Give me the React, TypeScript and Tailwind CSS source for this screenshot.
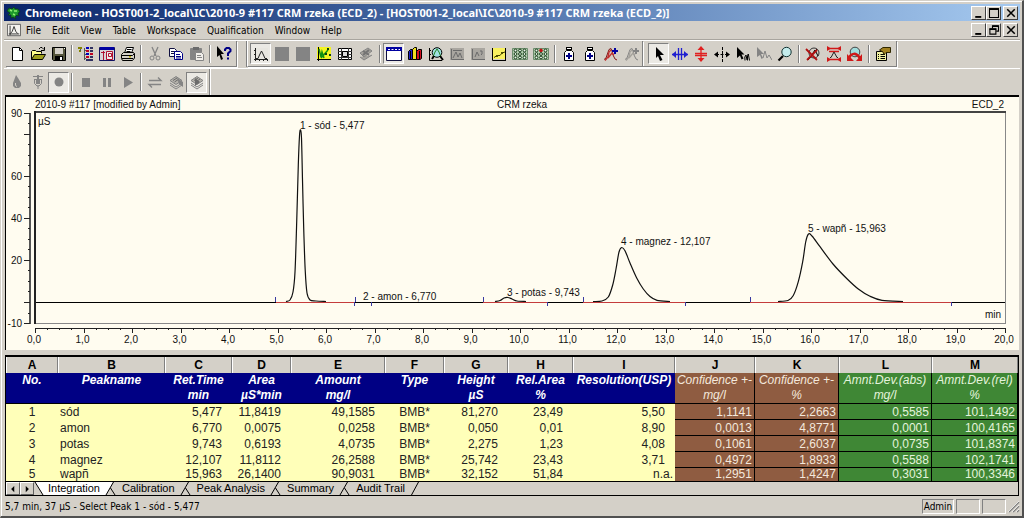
import type { ReactNode } from "react";

const UI = "font-['DejaVu_Sans_Condensed','Noto_Sans',sans-serif]";

/* ---------- icons ---------- */

type LineProps = { d: string; c?: string; f?: string; w?: number };
const L = ({ d, c = "#000", f = "none", w = 1 }: LineProps) => (
  <path d={d} stroke={c} fill={f} strokeWidth={w} />
);
const F = ({ d, c = "#000" }: { d: string; c?: string }) => <path d={d} fill={c} />;

const Icon = ({ children, size = "size-4" }: { children: ReactNode; size?: string }) => (
  <svg viewBox="0 0 16 16" className={`${size} shrink-0`} aria-hidden="true">
    {children}
  </svg>
);

const GREY = "#848484";

const peakGlyph = (c: string, bg: string) => (
  <>
    <F d="M1 2H15V14H1Z" c={bg} />
    <L d="M2.5 2V15M1 13.5H15M1 4.5H2M1 8.5H2M6.5 14V15M10.5 14V15M14.5 13V15" c={c} />
    <L d="M3 12.5H5L6.5 9L8.5 5L10.5 9L12 12.5H14" c={c} />
  </>
);

const bottle = (
  <>
    <F d="M5 1H11V4H5Z" />
    <F d="M6 2H10V3H6Z" c="#fff" />
    <L d="M5.5 4.5H10.5L12.5 6.5V14.5H3.5V6.5Z" f="#fff" />
    <F d="M7 7H9V9H11V11H9V13H7V11H5V9H7Z" c="#000084" />
  </>
);

const vials = (red: boolean) => (
  <>
    <L d="M.5 2.5H15.5V13.5H.5Z" c="#6c8c6c" f="#b4d0b0" />
    {[4.5, 8, 11.5].map((y) =>
      [3.5, 8, 12.5].map((x) => (
        <circle
          key={`${x}-${y}`}
          cx={x}
          cy={y}
          r="1.4"
          fill={red && y === 4.5 && x === 8 ? "#c01010" : "#eef6ee"}
          stroke={red && y === 4.5 && x === 8 ? "#c01010" : "#163c16"}
        />
      )),
    )}
  </>
);

const doublePeak = (c: string, a: string, r: string) => (
  <>
    <L d="M1 13.5L3 12L6 3.5L8 2.5L9 5L10 9L12 13L14 14" c={c} />
    <L d="M2 14.5L5 11L6 6L8 4M5 12L9 7L11 9" c={r} w={1.4} />
    <F d="M11 2H13V4H15V6H13V8H11V6H9V4H11Z" c={a} />
  </>
);

const stack = (on: boolean) => (
  <>
    <L d="M2 11L8 15L14 11M2 9L8 13L14 9" c={GREY} />
    <L d="M2 6.5L8 2.5L14 6.5L8 10.5Z" c={GREY} f="#b5b2ab" />
    <L d="M5 6.5L9 4M6.5 8L11 5" c="#6b6b6b" />
    {on ? <F d="M6 4L11 8L6 12Z" c="#6b6b6b" /> : <F d="M9 4L15 8V13L11 10Z" c={GREY} />}
  </>
);

const icons: Record<string, ReactNode> = {
  new: <><L d="M3.5 1.5H10.5L13.5 4.5V14.5H3.5Z" f="#fff" /><L d="M10.5 1.5V4.5H13.5" /></>,
  open: (
    <>
      <L d="M1.5 13.5V5.5L2.5 4.5H5.5L6.5 5.5H11.5V7.5" f="#ffff8c" />
      <L d="M1.5 13.5L4.5 8.5H15.5L12.5 13.5Z" f="#a0a020" />
      <L d="M9 3L10.5 1.5H12L14 3.5M14.5 1V4.5H11" />
    </>
  ),
  save: (
    <>
      <L d="M1.5 1.5H14.5V14.5H2.5L1.5 13.5Z" f="#55553a" />
      <F d="M4 2H12V8H4Z" c="#d4d0c8" />
      <F d="M4 10H12V14H4Z" />
      <F d="M9 11H11V14H9Z" c="#fff" />
      <F d="M13 2H14V3H13Z" c="#fff" />
    </>
  ),
  tree: (
    <>
      <F d="M0 1H4V3H0ZM1 4H3V6H1Z" c="#848400" />
      <L d="M2.5 3V5M6.5 2V14M6 4.5H8M6 8.5H8M6 12.5H8" c="#555" />
      <F d="M8 1H11V3H8ZM8 7H11V9H8Z" c="#0000c0" />
      <F d="M8 4H11V6H8ZM8 10H11V12H8ZM12 7H15V9H12Z" c="#c00020" />
      <F d="M12 1H15V3H12ZM12 4H15V6H12ZM12 10H15V12H12ZM8 13H15V15H8Z" c="#303060" />
    </>
  ),
  layout: (
    <>
      <L d="M.5 1.5H15.5V14.5H.5Z" c="#101060" f="#d8d4d8" />
      <F d="M1 1H15V4H1Z" c="#0000a0" />
      <L d="M7.5 5.5H13.5V13.5H7.5ZM9.5 7.5H12.5V10.5H9.5Z" c="#b01030" f="#eee" />
      <L d="M4.5 5V14M2 6.5H6" c="#b01030" />
    </>
  ),
  print: (
    <>
      <L d="M4.5 7L6.5 1.5H13.5L11.5 7" f="#fff" />
      <L d="M7 3.5H11.5M6.5 5.5H10.5" />
      <L d="M1.5 8.5L3.5 6.5H13.5L14.5 8V12L12.5 14.5H2.5L1.5 12.5Z" f="#d4d0c8" />
      <L d="M1.5 9.5H12.5L14.5 7.5M2 12.5H13" />
      <F d="M9 10H11V11.5H9Z" c="#c0b000" />
    </>
  ),
  cut: (
    <>
      <L d="M5 1L9 10M11 1L7 10" c={GREY} w={1.3} />
      <circle cx="5" cy="12" r="2" fill="none" stroke={GREY} />
      <circle cx="11" cy="12" r="2" fill="none" stroke={GREY} />
    </>
  ),
  copy: (
    <>
      <L d="M1.5 2.5H6.5L8.5 4.5V10.5H1.5Z" c="#101040" f="#fff" />
      <L d="M3 5.5H7M3 7.5H7" c="#101040" />
      <L d="M6.5 5.5H12.5L14.5 7.5V13.5H6.5Z" c="#000084" f="#fff" />
      <L d="M8 8.5H12M8 10.5H13M8 12H13" c="#000084" />
    </>
  ),
  paste: (
    <>
      <L d="M1.5 2.5H12.5V13.5H1.5Z" c={GREY} f={GREY} />
      <F d="M4 1H10V4H4Z" c="#6b6b6b" />
      <L d="M6.5 6.5H12.5L14.5 8.5V14.5H6.5Z" c={GREY} f="#f0eeea" />
      <L d="M8 9.5H12M8 11.5H13" c={GREY} />
    </>
  ),
  help: (
    <>
      <F d="M1 0L8 8H5L7 13L5 14L3.5 9L1 11Z" />
      <L d="M9 5V3.5L10.5 2H13L14.5 3.5V5L12 7.5V10M12 11.5V13.5" c="#000084" w={2} />
    </>
  ),
  drop: <><F d="M7 1L9 4L12 9V12L10 14H6L4 12V9Z" c={GREY} /><L d="M6.5 9V11.5L8 12.5" c="#d4d0c8" /></>,
  pump: (
    <>
      <L d="M3 2.5H13M4.5 5V9.5L7 12H9L11.5 9.5V5M4 5.5H12" c={GREY} />
      <F d="M6 6H10V10H6ZM7 1H9V5H7ZM7.5 11H8.5V15H7.5Z" c={GREY} />
    </>
  ),
  record: <circle cx="8" cy="8" r="4.5" fill={GREY} />,
  stop: <F d="M4 4H12V13H4Z" c={GREY} />,
  pause: <F d="M4 4H7V13H4ZM9 4H12V13H9Z" c={GREY} />,
  play: <F d="M4 3L13 8.5L4 14Z" c={GREY} />,
  swap: <L d="M2 6.5H14L11 3.5M14 10.5H2L5 13.5" c={GREY} w={1.4} />,
  stackA: stack(false),
  stackB: stack(true),
  peak: peakGlyph("#222", "#e8e6e0"),
  block: <F d="M1 1H15V15H1Z" c={GREY} />,
  calib: (
    <>
      <F d="M1 1H15V13H1Z" c="#f4f420" />
      <L d="M2.5 1V15M1 13.5H15" />
      <L d="M3 3L5 11L6 6L8 12M5 12L12 4" c="#109010" w={1.5} />
      <F d="M11 2H13V4H11ZM13 8H15V10H13ZM9 7H11V9H9Z" c="#104010" />
    </>
  ),
  report: (
    <>
      <L d="M1.5 2.5H14.5V13.5H1.5Z" f="#fff" />
      <L d="M1 5.5H15M1 8.5H15M1 11.5H15M4.5 2V14M11.5 2V14" c="#333" />
      <L d="M5.5 5.5H10.5V10.5H5.5Z" f="#ddd" />
    </>
  ),
  flip: (
    <>
      <L d="M2 7L10 2L14 5L6 11ZM2 11L6 14L14 9" c={GREY} f="#a5a29c" />
      <L d="M5 5L11 9M11 4L5 9" c="#747474" w={2} />
    </>
  ),
  window: <><L d="M.5 1.5H15.5V14.5H.5Z" c="#101040" f="#fff" /><F d="M0 1H16V5H0Z" c="#0000a0" /><path d="M2 3.5H14" stroke="#fff" strokeDasharray="2 1.5" /></>,
  books: (
    <>
      <L d="M1.5 5.5L3.5 3.5H5.5V13.5H1.5Z" f="#2020c0" />
      <L d="M5.5 3.5L7.5 1.5H9.5V13.5H5.5Z" f="#f0e020" />
      <L d="M9.5 5.5L11.5 3.5H14.5V12.5L13 13.5H9.5Z" f="#d01020" />
      <L d="M3.5 5V14M12.5 5V14" />
    </>
  ),
  zoomPeak: (
    <>
      <L d="M1.5 2V14.5H14M1 4.5H3M1 8.5H3" />
      <circle cx="9" cy="6.5" r="4.8" fill="#9fe0e0" stroke="#000" />
      <L d="M5 11L7 6L9 3L11 6L13 11" c="#208020" />
      <L d="M4 13L6 10M12 10L15 14" w={2} />
    </>
  ),
  greyA: <><F d="M1 2H15V14H1Z" c="#a9a6a0" /><L d="M2.5 3V13.5H15M4 12L7 6L9 11L11 7L13 12M4 4.5H13" c="#6b6b6b" /></>,
  greyB: <><F d="M1 2H15V14H1Z" c="#a9a6a0" /><L d="M2.5 3V13.5H15M5 11L7 6L9 10M10 5H12V8L11 9" c="#6b6b6b" /></>,
  trend: <><F d="M2 2H15V13H2Z" c="#f8f060" /><L d="M1.5 2V14.5H15M14.5 2V14" /><L d="M3 11.5L6 9.5H9L11 7L14 6" c="#404000" /><F d="M5 9H7V11H5ZM10 6H12V8H10Z" c="#505000" /></>,
  vials: vials(false),
  vialsRed: vials(true),
  bottle,
  addPeak: doublePeak("#801818", "#0000a0", "#c03030"),
  addPeakOff: doublePeak(GREY, GREY, "#a5a29c"),
  arrow: <F d="M5 1L13 9H9L11.5 14L9 15L7 10L5 12Z" />,
  spreadH: <><L d="M6.5 2V14M9.5 2V14M0 8.5H16" c="#2020d0" w={1.3} /><F d="M0 8.5L4 5V12ZM16 8.5L12 5V12Z" c="#2020d0" /></>,
  spreadV: <><L d="M2 7.5H14M2 9.5H14M8 2V15" c="#e02020" w={1.3} /><F d="M8 0L11.5 4H4.5ZM8 16L11.5 12H4.5Z" c="#e02020" /></>,
  moveLine: <><path d="M8.5 1V16" stroke="#000" strokeDasharray="3 1" /><path d="M2 8.5H15" stroke="#000" strokeDasharray="3 1.5" /><F d="M0 8.5L4 5.5V11.5ZM16 8.5L12 5.5V11.5Z" /></>,
  arrowPeak: <><F d="M2 1L9.5 8.5H6.5L8.5 12.5L6.5 13.5L5 9.5L2 12Z" /><L d="M10 14.5L9.8 11L11 9L12 14M12.5 14.5V9.5L13.3 8L14.5 14.5" /></>,
  arrowPeakOff: <><F d="M1 1L8 8H5L7 12L5.5 13L4 9L1 11Z" c={GREY} /><L d="M7 12L9 5L11 12L13 9L16 14" c={GREY} /></>,
  magnify: <><circle cx="9.5" cy="6" r="4.7" fill="#c4ecec" stroke="#103030" /><L d="M6 10L1.5 14.5" w={2.2} /></>,
  noZoom: (
    <>
      <circle cx="9" cy="7" r="5" fill="none" stroke="#333" />
      <L d="M5 12L8 7L10 4L13 10M3 14L12 3" />
      <L d="M1 3L12 14M2 14L12 4" c="#b01010" w={1.8} />
    </>
  ),
  fit: <><L d="M1 2.5H15M1 13.5H15M3 5.5H13" c="#d01818" w={1.5} /><F d="M1 0L5 2.5L1 5ZM15 0L11 2.5L15 5ZM1 11L5 13.5L1 16ZM15 11L11 13.5L15 16Z" c="#d01818" /><L d="M4 11.5H5L8 6L11 11.5H12" c="#222" /></>,
  redo: <><circle cx="8" cy="6" r="4.8" fill="#a0dcdc" stroke="#444" /><L d="M2 12C4 7 9 6 13 12" c="#d01818" w={2.5} /><F d="M0 8V15H7ZM15 8V15H9Z" c="#d01818" /></>,
  props: (
    <>
      <L d="M1.5 5.5H11.5V14.5H1.5Z" f="#f0f0a0" />
      <L d="M3 8.5H4M5.5 8.5H10M3 10.5H4M5.5 10.5H10M3 12.5H4M5.5 12.5H10" />
      <L d="M4.5 4L8 1.5H15.5V6.5H11L9 8.5L8 6Z" f="#a08020" c="#302800" />
    </>
  ),
};

/* ---------- toolbars ---------- */

type Item = { id: string; label: string; pressed?: boolean } | null;

const b = (id: string, label: string, pressed = false): Item => ({ id, label, pressed });

const fileTools: Item[] = [
  b("new", "New"), b("open", "Open"), b("save", "Save"), null,
  b("tree", "Browser"), b("layout", "Panel"), b("print", "Print"), null,
  b("cut", "Cut"), b("copy", "Copy"), b("paste", "Paste"), null, b("help", "Context help"),
];

const viewTools: Item[] = [
  b("peak", "Chromatogram", true), b("block", "Spectrum"), b("block", "Contour"),
  b("calib", "Calibration plot"), b("report", "Report"), b("flip", "Printer layout"), null,
  b("window", "Window", true), b("books", "Library"), b("zoomPeak", "Peak view"),
  b("greyA", "Spectra view"), b("greyB", "Purity view"), b("trend", "Trend"),
  b("vials", "Vials"), b("vialsRed", "Current vial"), null,
  b("bottle", "Previous sample"), b("bottle", "Next sample"),
  b("addPeak", "Add chromatogram"), b("addPeakOff", "Remove chromatogram"),
];

const editTools: Item[] = [
  b("arrow", "Select", true), b("spreadH", "Peak width"), b("spreadV", "Peak height"),
  b("moveLine", "Move delimiter"), b("arrowPeak", "Peak tool"), b("arrowPeakOff", "Baseline tool"),
  b("magnify", "Zoom"), null, b("noZoom", "Unzoom"), b("fit", "Fit"), b("redo", "Redo"), null,
  b("props", "Properties"),
];

const runTools: Item[] = [
  b("drop", "Flow"), b("pump", "Inject"), b("record", "Acquire", true), null,
  b("stop", "Stop"), b("pause", "Pause"), b("play", "Start"), null,
  b("swap", "Swap"), b("stackA", "Batch"), b("stackB", "Start batch", true),
];

function Tools({ items, wide }: { items: Item[]; wide?: boolean }) {
  return (
    <>
      {items.map((item, i) =>
        item ? (
          <button
            key={i}
            type="button"
            aria-label={item.label}
            className={`flex h-[21px] w-[21px] shrink-0 items-center justify-center ${
              item.pressed ? "border border-t-[#808080] border-l-[#808080] border-r-white border-b-white bg-[#ebe9e4]" : ""
            }`}
          >
            <Icon>{icons[item.id]}</Icon>
          </button>
        ) : (
          <span key={i} className={`flex shrink-0 justify-center ${wide ? "w-[7px]" : "w-1.5"}`}>
            <span className="h-[18px] w-0.5 border-r border-l border-r-white border-l-[#808080]" />
          </span>
        ),
      )}
    </>
  );
}

/* ---------- window chrome ---------- */

function FrameButtons({ restore }: { restore?: boolean }) {
  const cls =
    "flex h-3.5 w-[15px] items-center justify-center border border-t-white border-l-white border-r-[#404040] border-b-[#404040] bg-[#d4d0c8]";
  return (
    <div className="flex shrink-0">
      <button type="button" aria-label="Minimize" className={cls}>
        <Icon size="size-3"><F d="M3 12H11V14.5H3Z" /></Icon>
      </button>
      <button type="button" aria-label={restore ? "Restore" : "Maximize"} className={cls}>
        <Icon size="size-3">
          {restore ? (
            <><L d="M6 6V2.5H14V9.5H11" w={1.5} /><L d="M2.5 6.5H10.5V13.5H2.5Z" w={1.5} /><F d="M2 6H11V8H2ZM6 2H14V4H6Z" /></>
          ) : (
            <><L d="M2 2.5H14V14H2Z" w={1.4} /><F d="M1.5 1.5H14.5V4H1.5Z" /></>
          )}
        </Icon>
      </button>
      <button type="button" aria-label="Close" className={`${cls} ml-0.5`}>
        <Icon size="size-3"><L d="M3 3L13 13M13 3L3 13" w={2} /></Icon>
      </button>
    </div>
  );
}

/* ---------- chromatogram ---------- */

const px = (min: number) => 35 + min * 48.5;
const py = (v: number) => 302 - v * 2.105;

type Pt = [number, number];

function smooth(p: Pt[]) {
  let d = `M${p[0][0]} ${p[0][1]}`;
  for (let i = 0; i < p.length - 1; i++) {
    const a = p[Math.max(i - 1, 0)];
    const s = p[i];
    const e = p[i + 1];
    const z = p[Math.min(i + 2, p.length - 1)];
    d += `C${s[0] + (e[0] - a[0]) / 6} ${s[1] + (e[1] - a[1]) / 6} ${e[0] - (z[0] - s[0]) / 6} ${e[1] - (z[1] - s[1]) / 6} ${e[0]} ${e[1]}`;
  }
  return d;
}

const peaks: Pt[][] = [
  [[286, 301.5], [290, 300], [293, 292], [295, 272], [296.7, 222], [298.3, 165], [299.5, 136], [300.5, 130], [301.5, 138], [302.5, 180], [303.7, 228], [305.2, 270], [307, 293], [310, 300], [316, 301], [326, 301.5]],
  [[495, 301.5], [500, 300.5], [504, 298], [508, 297.5], [512, 299], [517, 301], [526, 301.5]],
  [[593, 301.5], [602, 301], [608.3, 297], [612.7, 285], [616, 269], [619, 252], [621.7, 247.5], [625, 250.7], [630, 263], [636.7, 278], [643.3, 289], [650, 296.5], [657, 300.3], [670, 301.5]],
  [[778, 301.5], [788, 300.5], [793.3, 295.5], [798.3, 281.7], [802.7, 261.7], [805.7, 242], [808.5, 234], [812, 236], [820, 246.7], [833, 264], [846.7, 278.5], [858.3, 289], [870, 296.3], [882, 300.3], [903, 301.5]],
];

const integrated: Pt[] = [[276, 355], [483, 547], [583, 685], [750, 951]];
const idle: Pt[] = [[36, 276], [355, 483], [547, 583], [685, 750], [951, 1005]];
const starts = [275.5, 355.5, 483.5, 583.5, 750.5];
const ends = [354.5, 371.5, 547.5, 685.5, 951.5];

const labels: [number, number, string][] = [
  [300, 129, "1 - sód - 5,477"],
  [363, 300, "2 - amon - 6,770"],
  [507, 296, "3 - potas - 9,743"],
  [621, 245, "4 - magnez - 12,107"],
  [808, 232, "5 - wapñ - 15,963"],
  [38, 125, "µS"],
  [35, 108, "2010-9 #117 [modified by Admin]"],
  [497, 108, "CRM rzeka"],
];

function Chromatogram() {
  const yMajor = [90, 80, 60, 40, 20, 0, -10];
  const yMinor = Array.from({ length: 21 }, (_, i) => -10 + i * 5);
  const xTicks = Array.from({ length: 81 }, (_, i) => i / 4);
  return (
    <svg viewBox="6 97 1013 253" className="block h-auto w-full font-['Liberation_Sans',Arial,sans-serif] text-[10px]" role="img" aria-label="Chromatogram">
      <g shapeRendering="crispEdges" fill="none" stroke="#222">
        <path d="M34 323.5H1005.5V112" stroke="#888" />
        <path d="M34 112H1006" strokeWidth="2" stroke="#444" />
        <path d="M35 111V324" strokeWidth="2" />
        <path d={`M30 ${Math.round(py(90))}V324`} stroke="#555" strokeWidth="2" />
        <path d={yMajor.map((v) => `M24 ${Math.round(py(v)) + 0.5}H30`).join("")} />
        <path d={yMinor.map((v) => `M28 ${Math.round(py(v)) + 0.5}H30`).join("")} />
        <path d="M35 328.5H1006" />
        <path d={xTicks.map((v) => `M${Math.round(px(v)) + 0.5} 328V${v % 1 ? 330 : 333}`).join("")} />
        <path d={idle.map(([a, z]) => `M${a} 302.5H${z}`).join("")} stroke="#000" />
      </g>
      {peaks.map((p, i) => (
        <path key={i} d={smooth(p)} fill="none" stroke="#111" strokeWidth="1.2" />
      ))}
      <g shapeRendering="crispEdges" fill="none">
        <path d={integrated.map(([a, z]) => `M${a} 302.5H${z}`).join("")} stroke="#c43c3c" />
        <path d={starts.map((x) => `M${x} 297V302`).join("")} stroke="#3838a0" />
        <path d={ends.map((x) => `M${x} 302V306`).join("")} stroke="#3838a0" />
      </g>
      <g fill="#111">
        {labels.map(([x, y, t]) => (
          <text key={t} x={x} y={y}>{t}</text>
        ))}
        <text x="1004" y="108" textAnchor="end">ECD_2</text>
        <text x="1001" y="318" textAnchor="end">min</text>
        {[90, 60, 40, 20, -10].map((v) => (
          <text key={v} x="22" y={Math.round(py(v)) + 4} textAnchor="end">{v}</text>
        ))}
        {Array.from({ length: 21 }, (_, i) => (
          <text key={i} x={px(i) - 1} y="343" textAnchor="middle">{`${i},0`}</text>
        ))}
      </g>
    </svg>
  );
}

/* ---------- results table ---------- */

type Tone = "main" | "brown" | "green";
type Col = { w: number; name: string; unit: string; tone: Tone; align: string };

const R = "text-right pr-2.5";
const RN = "text-right pr-0.5";

const cols: Col[] = [
  { w: 52, name: "No.", unit: "", tone: "main", align: "text-center" },
  { w: 107, name: "Peakname", unit: "", tone: "main", align: "text-left pl-0.5" },
  { w: 67, name: "Ret.Time", unit: "min", tone: "main", align: R },
  { w: 59, name: "Area", unit: "µS*min", tone: "main", align: R },
  { w: 94, name: "Amount", unit: "mg/l", tone: "main", align: R },
  { w: 59, name: "Type", unit: "", tone: "main", align: "text-center" },
  { w: 64, name: "Height", unit: "µS", tone: "main", align: R },
  { w: 65, name: "Rel.Area", unit: "%", tone: "main", align: R },
  { w: 102, name: "Resolution(USP)", unit: "", tone: "main", align: R },
  { w: 80, name: "Confidence +-", unit: "mg/l", tone: "brown", align: RN },
  { w: 84, name: "Confidence +-", unit: "%", tone: "brown", align: RN },
  { w: 93, name: "Amnt.Dev.(abs)", unit: "mg/l", tone: "green", align: RN },
  { w: 86, name: "Amnt.Dev.(rel)", unit: "%", tone: "green", align: RN },
];
const total = cols.reduce((s, c) => s + c.w, 0);

const rows = [
  ["1", "sód", "5,477", "11,8419", "49,1585", "BMB*", "81,270", "23,49", "5,50", "1,1141", "2,2663", "0,5585", "101,1492"],
  ["2", "amon", "6,770", "0,0075", "0,0258", "BMB*", "0,050", "0,01", "8,90", "0,0013", "4,8771", "0,0001", "100,4165"],
  ["3", "potas", "9,743", "0,6193", "4,0735", "BMB*", "2,275", "1,23", "4,08", "0,1061", "2,6037", "0,0735", "101,8374"],
  ["4", "magnez", "12,107", "11,8112", "26,2588", "BMB*", "25,742", "23,43", "3,71", "0,4972", "1,8933", "0,5588", "102,1741"],
  ["5", "wapñ", "15,963", "26,1400", "90,9031", "BMB*", "32,152", "51,84", "n.a.", "1,2951", "1,4247", "0,3031", "100,3346"],
];

const headTone: Record<Tone, string> = {
  main: "bg-[#000084] font-bold text-white",
  brown: "bg-[#8f5c41] font-normal text-[#f4e8dc] border-r border-r-black",
  green: "bg-[#3f8735] font-normal text-[#e4f4dc] border-r border-r-black",
};
const cellTone: Record<Tone, string> = {
  main: "bg-[#ffffb9] text-[#222]",
  brown: "bg-[#8f5c41] text-[#f4e8dc] border-r border-black",
  green: "bg-[#3f8735] text-[#e4f4dc] border-r border-black",
};

function rowBox(tone: Tone, last: boolean) {
  if (last) return "h-[13px] py-0 leading-[13px]";
  return tone === "main" ? "h-4 py-0 leading-4" : "h-4 border-b pt-px pb-0 leading-[14px]";
}

function Results() {
  return (
    <table className="w-full table-fixed border-separate border-spacing-0 text-xs">
      <colgroup>
        {cols.map((c, i) => (
          <col key={i} style={{ width: `${(c.w / total) * 100}%` }} />
        ))}
      </colgroup>
      <thead>
        <tr>
          {cols.map((_, i) => (
            <th key={i} className="h-4 border-r border-l border-r-[#808080] border-l-white bg-[#d4d0c8] p-0 leading-4 font-bold">
              {String.fromCharCode(65 + i)}
            </th>
          ))}
        </tr>
        <tr>
          {cols.map((c, i) => (
            <th key={i} className={`h-[31px] border-b border-b-black p-0 align-top leading-[15px] whitespace-nowrap italic ${headTone[c.tone]}`}>
              {c.name}
              {c.unit && <span className="block">{c.unit}</span>}
            </th>
          ))}
        </tr>
      </thead>
      <tbody>
        {rows.map((r, n) => (
          <tr key={r[0]}>
            {r.map((v, i) => (
              <td
                key={i}
                className={`${rowBox(cols[i].tone, n === rows.length - 1)} ${cellTone[cols[i].tone]} ${v === "n.a." ? RN : cols[i].align}`}
              >
                {v}
              </td>
            ))}
          </tr>
        ))}
      </tbody>
    </table>
  );
}

const tabs = ["Integration", "Calibration", "Peak Analysis", "Summary", "Audit Trail"];

const Joint = ({ white, last }: { white?: boolean; last?: boolean }) => (
  <svg viewBox="0 0 14 14" className="size-3.5 shrink-0" aria-hidden="true">
    {white && <path d="M0 0H9L2 13H0Z" fill="#fff" />}
    <path d={last ? "M9.5 0L2.5 13" : "M9.5 0L2 13M6.5 6L11 13"} stroke="#000" fill="none" />
  </svg>
);

function SheetTabs() {
  const arrow = "flex w-3.5 items-center justify-center border border-t-white border-l-white border-r-[#606060] border-b-[#606060]";
  return (
    <div className="flex h-3.5 items-stretch border-t border-black bg-[#d4d0c8] text-[11px] leading-[13px]">
      <button type="button" aria-label="Previous sheet" className={arrow}>
        <Icon size="size-2.5"><F d="M10 3V13L5 8Z" /></Icon>
      </button>
      <button type="button" aria-label="Next sheet" className={arrow}>
        <Icon size="size-2.5"><F d="M6 3V13L11 8Z" /></Icon>
      </button>
      <svg viewBox="0 0 10 14" className="h-3.5 w-2.5 shrink-0" aria-hidden="true">
        <path d="M1 0H10V13H9Z" fill="#fff" />
        <path d="M1 0L9 13" stroke="#000" />
      </svg>
      {tabs.map((t, i) => (
        <div key={t} className="flex">
          <button type="button" className={`px-1 whitespace-nowrap ${i === 0 ? "bg-white" : ""}`}>{t}</button>
          <Joint white={i === 0} last={i === tabs.length - 1} />
        </div>
      ))}
    </div>
  );
}

/* ---------- page ---------- */

const title =
  "Chromeleon - HOST001-2_local\\IC\\2010-9 #117 CRM rzeka (ECD_2) - [HOST001-2_local\\IC\\2010-9 #117 CRM rzeka (ECD_2)]";
const menus = ["File", "Edit", "View", "Table", "Workspace", "Qualification", "Window", "Help"];

const group = "flex items-center border-r border-b border-[#808080] shadow-[1px_1px_0_#fff]";
const well = "h-[15px] border border-t-[#808080] border-l-[#808080] border-r-white border-b-white";

export default function App() {
  return (
    <div className="min-h-screen border-t border-r-2 border-b-2 border-l border-t-[#d4d0c8] border-r-[#505050] border-b-[#505050] border-l-[#d4d0c8] bg-[#d4d0c8] font-['Liberation_Sans',Arial,sans-serif] text-black">
      <div className="border-t border-l border-white pt-0.5 pr-0.5 pl-0.5">
        <header className="flex h-[17px] items-center bg-linear-to-r from-[#0a246a] to-[#a6caf0] pr-0.5 pl-0.5">
          <svg viewBox="0 0 16 16" className="mr-[3px] size-4 shrink-0" aria-hidden="true">
            <path d="M1 6L3 3L6 4L8 2L9 4L12 4L14 7L12 8L13 11L11 10L9 12L10 14L7 12L5 13L5 10L2 10L4 8Z" fill="#1e9a2c" stroke="#0a3c14" strokeWidth=".8" />
            <path d="M4 5L6 6M8 6L11 6M7 9L9 10" stroke="#8cf070" strokeWidth="1.4" />
          </svg>
          <h1 className="min-w-0 flex-1 truncate font-['Noto_Sans',sans-serif] text-[11px] leading-[17px] font-bold text-white">{title}</h1>
          <FrameButtons />
        </header>

        <nav className={`flex h-[19px] items-center border-b border-[#a8a59e] pr-0.5 pl-[3px] text-[10px] ${UI}`}>
          <svg viewBox="0 0 16 16" className="mr-[5px] size-3.5 shrink-0" aria-hidden="true">
            <path d="M.5 1.5H15.5V14.5H.5Z" fill="#f4f2ee" stroke="#555" />
            <path d="M3.5 3V14M2 12.5H14M4 12L6 9.5L8 4L10 9.5L12 12" stroke="#222" fill="none" />
          </svg>
          <div className="flex flex-1 gap-[11px]">
            {menus.map((m) => (
              <button key={m} type="button">{m}</button>
            ))}
          </div>
          <FrameButtons restore />
        </nav>

        <div className="flex h-7 items-stretch border-t border-white pb-px pl-0.5">
          <div className={`${group} pr-0.5`}><Tools items={fileTools} /></div>
          <div className="ml-[9px] flex border-l border-[#808080]">
            <div className={`${group} border-l border-l-white pl-0.5`}><Tools items={viewTools} wide /></div>
            <div className={`${group} pr-[3px] pl-[5px]`}><Tools items={editTools} wide /></div>
          </div>
        </div>

        <div className="flex h-[27px] items-stretch border-t border-white pl-0.5">
          <div className="flex items-center border-r border-[#808080] pr-0.5 shadow-[1px_0_0_#fff]"><Tools items={runTools} /></div>
        </div>

        <main className="pr-px pl-px">
          <section className="border-t-2 border-l border-black bg-[#fffcf0]">
            <Chromatogram />
          </section>
          <section className="mt-[5px] border border-t-2 border-black">
            <Results />
            <SheetTabs />
          </section>
        </main>

        <footer className={`flex h-5 items-center pl-px text-[10px] ${UI}`}>
          <p className="flex-1">5,7 min, 37 µS - Select Peak 1 - sód - 5,477</p>
          <div className="flex gap-0.5">
            <span className={`${well} flex w-8 items-center justify-center leading-[13px]`}>Admin</span>
            <span className={`${well} w-6`} />
            <span className={`${well} w-6`} />
          </div>
          <svg viewBox="0 0 14 14" className="size-3.5 shrink-0" aria-hidden="true">
            <path d="M3 13L13 3M7 13L13 7M11 13L13 11" stroke="#808080" strokeWidth="1.5" />
            <path d="M2 13L13 2M6 13L13 6M10 13L13 10" stroke="#fff" strokeWidth=".7" />
          </svg>
        </footer>
      </div>
    </div>
  );
}
